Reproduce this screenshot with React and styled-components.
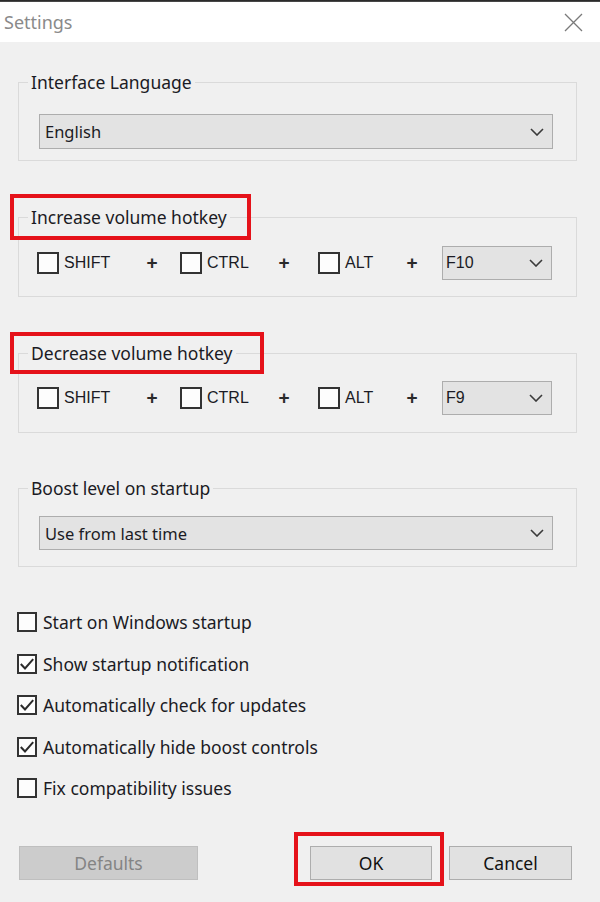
import React from "react";
import styled, { createGlobalStyle, css } from "styled-components";

const GlobalStyle = createGlobalStyle`
  html, body { margin: 0; padding: 0; background: #f0f0f0; }
  body { font-family: "Noto Sans", "Open Sans", sans-serif; }
  *, *::before, *::after { box-sizing: border-box; }
`;

const Window = styled.div`
  width: 600px;
  height: 902px;
  background: #f0f0f0;
  overflow: hidden;
  display: flex;
  flex-direction: column;
`;

const TopEdge = styled.div`
  height: 2px;
  background: linear-gradient(#1c1c1c, #555);
`;

const TitleBar = styled.div`
  height: 40px;
  background: #fff;
  display: flex;
  align-items: center;
  justify-content: space-between;
  padding: 0 17px 0 4px;
`;

const Title = styled.span`
  font-size: 18px;
  color: #8a8a8a;
  line-height: 1;
`;

const Body = styled.div`
  display: flex;
  flex-direction: column;
  padding: 31px 23px 0 18px;
`;

const Group = styled.fieldset`
  margin: ${(p) => p.$mt || 0}px 0 0;
  padding: ${(p) => p.$pt}px 23px ${(p) => p.$pb}px 9px;
  border: 1px solid #dadada;
  min-width: 0;
`;

const highlight = css`
  &::before {
    content: "";
    position: absolute;
    left: -18px;
    top: ${(p) => p.$hTop}px;
    width: ${(p) => p.$hW}px;
    height: ${(p) => p.$hH}px;
    border: 4px solid #e5121a;
    pointer-events: none;
  }
`;

const Legend = styled.legend`
  position: relative;
  padding: 0 3px;
  font-size: 17.5px;
  line-height: 18px;
  color: #1b1b24;
  ${(p) => p.$highlight && highlight}
`;

const Combo = styled.div`
  display: flex;
  align-items: center;
  justify-content: space-between;
  height: ${(p) => p.$h || 34}px;
  width: ${(p) => (p.$w ? `${p.$w}px` : "auto")};
  margin-left: ${(p) => p.$ml || 0}px;
  padding: 0 8px 0 ${(p) => p.$pl || 5}px;
  background: #e3e3e3;
  border: 1px solid #adadad;
  font-family: ${(p) =>
    p.$mono ? '"Liberation Sans", Arial, sans-serif' : '"Noto Sans", sans-serif'};
  font-size: ${(p) => (p.$mono ? 16 : 16.5)}px;
  color: #1b1b24;
`;

const HotkeyRow = styled.div`
  display: flex;
  align-items: center;
  padding-left: 9px;
`;

const Key = styled.label`
  display: flex;
  align-items: center;
  gap: 5px;
  width: ${(p) => p.$w}px;
  font-family: "Liberation Sans", Arial, sans-serif;
  font-size: 16px;
  color: #1b1b24;
`;

const Plus = styled.span`
  width: 24px;
  text-align: center;
  font-family: "Liberation Sans", Arial, sans-serif;
  font-size: 19px;
  font-weight: 700;
  color: #2a2a2a;
  margin-right: ${(p) => p.$mr}px;
`;

const Box = styled.span`
  width: ${(p) => p.$size}px;
  height: ${(p) => p.$size}px;
  border: 2px solid #333;
  background: #fdfdfd;
  display: flex;
  align-items: center;
  justify-content: center;
  flex-shrink: 0;
`;

const CheckList = styled.div`
  display: flex;
  flex-direction: column;
  gap: 17.5px;
  margin: 43px 0 0 -1px;
`;

const CheckRow = styled.label`
  display: flex;
  align-items: center;
  gap: 6px;
  height: 24px;
  font-size: 17.5px;
  color: #1b1b24;
`;

const ButtonRow = styled.div`
  display: flex;
  align-items: center;
  gap: 17px;
  margin-top: 46px;
  padding: 0 5px 0 1px;
`;

const Spacer = styled.div`
  flex: 1;
`;

const Button = styled.button`
  position: relative;
  width: ${(p) => p.$w}px;
  height: 34px;
  border: 1px solid #adadad;
  background: #e1e1e1;
  color: #111;
  font-family: "Noto Sans", sans-serif;
  font-size: 17.5px;
  padding: 0;
  &:disabled {
    background: #cccccc;
    border-color: #bfbfbf;
    color: #848484;
  }
  ${(p) =>
    p.$highlight &&
    css`
      &::after {
        content: "";
        position: absolute;
        left: -17px;
        top: -15px;
        right: -13px;
        bottom: -7px;
        border: 4px solid #e5121a;
        pointer-events: none;
      }
    `}
`;

const Chevron = () => (
  <svg width="14" height="8" viewBox="0 0 14 8">
    <path d="M1 1 L7 7 L13 1" fill="none" stroke="#3a3a3a" strokeWidth="1.6" />
  </svg>
);

const CloseIcon = () => (
  <svg width="19" height="19" viewBox="0 0 19 19">
    <path d="M1 1 L18 18 M18 1 L1 18" stroke="#7a7a7a" strokeWidth="1.3" />
  </svg>
);

const Check = () => (
  <svg width="16" height="16" viewBox="0 0 16 16">
    <path d="M1.8 8 L6 12.5 L14.2 3.2" fill="none" stroke="#2a2a2a" strokeWidth="2" />
  </svg>
);

const CheckBox = ({ size, checked }) => (
  <Box $size={size}>{checked && <Check />}</Box>
);

const Hotkey = ({ fkey }) => (
  <HotkeyRow>
    <Key $w={103}>
      <CheckBox size={22} />
      SHIFT
    </Key>
    <Plus $mr={16}>+</Plus>
    <Key $w={92}>
      <CheckBox size={22} />
      CTRL
    </Key>
    <Plus $mr={22}>+</Plus>
    <Key $w={82}>
      <CheckBox size={22} />
      ALT
    </Key>
    <Plus $mr={18}>+</Plus>
    <Combo $w={110} $mono $pl={3}>
      {fkey}
      <Chevron />
    </Combo>
  </HotkeyRow>
);

const options = [
  ["Start on Windows startup", false],
  ["Show startup notification", true],
  ["Automatically check for updates", true],
  ["Automatically hide boost controls", true],
  ["Fix compatibility issues", false],
];

export default function App() {
  return (
    <>
      <GlobalStyle />
      <Window>
        <TopEdge />
        <TitleBar>
          <Title>Settings</Title>
          <CloseIcon />
        </TitleBar>
        <Body>
          <Group $pt={23} $pb={11}>
            <Legend>Interface Language</Legend>
            <Combo $h={35} $ml={11}>
              English
              <Chevron />
            </Combo>
          </Group>
          <Group $mt={47} $pt={20} $pb={16}>
            <Legend $highlight $hTop={-14} $hW={241} $hH={46}>
              Increase volume hotkey
            </Legend>
            <Hotkey fkey="F10" />
          </Group>
          <Group $mt={47} $pt={19} $pb={17}>
            <Legend $highlight $hTop={-12} $hW={254} $hH={42}>
              Decrease volume hotkey
            </Legend>
            <Hotkey fkey="F9" />
          </Group>
          <Group $mt={46} $pt={19} $pb={16}>
            <Legend>Boost level on startup</Legend>
            <Combo $ml={11}>
              Use from last time
              <Chevron />
            </Combo>
          </Group>
          <CheckList>
            {options.map(([label, checked]) => (
              <CheckRow key={label}>
                <CheckBox size={20} checked={checked} />
                {label}
              </CheckRow>
            ))}
          </CheckList>
          <ButtonRow>
            <Button $w={179} disabled>
              Defaults
            </Button>
            <Spacer />
            <Button $w={122} $highlight>
              OK
            </Button>
            <Button $w={123}>Cancel</Button>
          </ButtonRow>
        </Body>
      </Window>
    </>
  );
}
